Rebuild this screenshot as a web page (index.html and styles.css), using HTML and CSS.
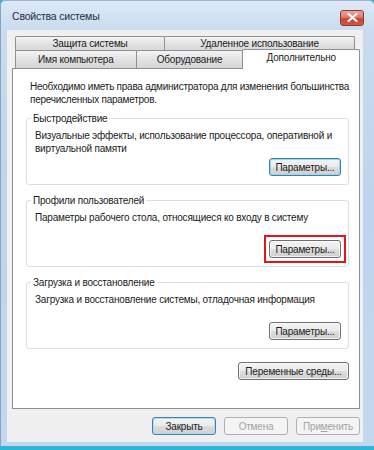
FILE: index.html
```html
<!DOCTYPE html>
<html lang="ru">
<head>
<meta charset="utf-8">
<title>Свойства системы</title>
<link rel="stylesheet" href="styles.css">
</head>
<body>
<div class="window">
  <div class="titlebar">
    <span class="title">Свойства системы</span>
    <span class="close">
      <svg width="11" height="9" viewBox="0 0 11 9"><path d="M1.5 1 L9.5 8 M9.5 1 L1.5 8" stroke="#fff" stroke-width="2.2" stroke-linecap="round"/></svg>
    </span>
  </div>
  <div class="client">
    <div class="tabs">
      <div class="tabrow row1">
        <div class="tab tab-protect">Защита системы</div>
        <div class="tab tab-remote">Удаленное использование</div>
      </div>
      <div class="tabrow row2">
        <div class="tab tab-name">Имя компьютера</div>
        <div class="tab tab-hw">Оборудование</div>
        <div class="tab tab-adv selected">Дополнительно</div>
      </div>
    </div>
    <div class="panel">
      <p class="note">Необходимо иметь права администратора для изменения большинства перечисленных параметров.</p>
      <fieldset class="group">
        <legend>Быстродействие</legend>
        <div class="desc">Визуальные эффекты, использование процессора, оперативной и виртуальной памяти</div>
        <div class="actions"><button class="btn btn-params focus">Параметры...</button></div>
      </fieldset>
      <fieldset class="group">
        <legend>Профили пользователей</legend>
        <div class="desc">Параметры рабочего стола, относящиеся ко входу в систему</div>
        <div class="actions"><span class="mark"><button class="btn btn-params">Параметры...</button></span></div>
      </fieldset>
      <fieldset class="group">
        <legend>Загрузка и восстановление</legend>
        <div class="desc">Загрузка и восстановление системы, отладочная информация</div>
        <div class="actions"><button class="btn btn-params">Параметры...</button></div>
      </fieldset>
      <div class="env"><button class="btn btn-env">Переменные среды...</button></div>
    </div>
    <div class="footer">
      <button class="btn btn-foot default">Закрыть</button>
      <button class="btn btn-foot disabled">Отмена</button>
      <button class="btn btn-foot disabled">При<u>м</u>енить</button>
    </div>
  </div>
</div>
</body>
</html>
```

FILE: styles.css
```css
* { box-sizing: border-box; }
html, body { margin: 0; padding: 0; }
body {
  width: 374px;
  height: 450px;
  background: #2fb6d6;
  font-family: "Liberation Sans", Arial, sans-serif;
  font-size: 10px;
  letter-spacing: -0.2px;
  color: #1b1b1b;
  overflow: hidden;
}
.window {
  width: 374px;
  height: 446px;
  background: linear-gradient(#dde9f6 0px, #c8dbf0 30px, #bed4ec 200px, #c3d8ef 446px);
  border-left: 1px solid #8aa3bf;
  border-top: 1px solid #9fb4cc;
  border-radius: 5px 5px 0 0;
  display: flex;
  flex-direction: column;
}
.titlebar {
  height: 29px;
  display: flex;
  align-items: center;
  justify-content: space-between;
  padding: 0 10px 0 11px;
}
.title {
  font-size: 10.5px;
  color: #1e2f45;
}
.close {
  width: 24px;
  height: 16px;
  margin-top: 4px;
  border: 1px solid #8a3b30;
  border-radius: 3px;
  background: linear-gradient(#eba596 0%, #dd7b68 45%, #c9432e 55%, #d25a44 100%);
  display: flex;
  align-items: center;
  justify-content: center;
}
.client {
  flex: 1;
  margin: 0 11px 4px 6px;
  background: #f0f0f0;
  padding: 6px 3px 7px 5px;
  display: flex;
  flex-direction: column;
}
.tabs {
  margin-left: 3px;
}
.tabrow {
  display: flex;
}
.row1 { height: 14px; }
.row2 { height: 18px; align-items: flex-end; }
.tab {
  border: 1px solid #8c9099;
  border-bottom: none;
  background: linear-gradient(#f4f4f4, #e2e2e2 50%, #d6d6d6);
  text-align: center;
  margin-left: -1px;
}
.tab:first-child { margin-left: 0; }
.row1 .tab { height: 15px; line-height: 13px; border-radius: 2px 2px 0 0; }
.row2 .tab { height: 18px; line-height: 18px; border-radius: 2px 2px 0 0; }
.tab-protect { width: 150px; }
.tab-remote { width: 191px; }
.tab-name { width: 122px; }
.tab-hw { width: 108px; }
.tab-adv { width: 118px; }
.row2 .tab.selected {
  height: 20px;
  margin-bottom: -1px;
  line-height: 16px;
  background: #fff;
  position: relative;
  z-index: 1;
}
.panel {
  flex: 1;
  background: #fff;
  border: 1px solid #8c9099;
  padding: 11px 10px 0 13px;
}
.note {
  margin: 0 -9px 6px 4px;
  line-height: 13px;
  letter-spacing: -0.25px;
}
.group {
  margin: 0 0 9px 0;
  border: 1px solid #d5dfe5;
  border-radius: 3px;
  padding: 4px 7px 8px 8px;
  min-width: 0;
}
.group legend {
  padding: 0 2px;
  margin-left: -4px;
  line-height: 13px;
}
.desc {
  line-height: 13px;
  min-height: 26px;
}
.actions {
  display: flex;
  justify-content: flex-end;
  margin-top: 3px;
}
.btn {
  font-family: "Liberation Sans", Arial, sans-serif;
  font-size: 10px;
  letter-spacing: -0.2px;
  color: #1b1b1b;
  height: 18px;
  padding: 0;
  border: 1px solid #707070;
  border-radius: 3px;
  background: linear-gradient(#f3f3f3 0%, #ebebeb 48%, #dddddd 52%, #cfcfcf 100%);
  box-shadow: inset 0 0 0 1px rgba(255,255,255,0.7);
}
.btn-params { width: 72px; }
.btn.focus {
  border-color: #3c7fb1;
  box-shadow: inset 0 0 0 1px #9ad5f3;
}
.mark {
  display: flex;
  border: 2px solid #e3141c;
  padding: 3px;
  margin: -5px -5px -5px 0;
}
.env {
  display: flex;
  justify-content: flex-end;
  margin-top: 13px;
}
.btn-env { width: 111px; }
.footer {
  display: flex;
  justify-content: flex-end;
  gap: 8px;
  margin-top: 8px;
}
.btn-foot { width: 64px; }
.btn.default {
  border-color: #3c7fb1;
  box-shadow: inset 0 0 0 1px #b6dcf4;
}
.btn.disabled {
  color: #a3a3a3;
  border-color: #adb2b5;
  background: #f4f4f4;
  box-shadow: none;
}
.btn u { text-decoration-color: #a3a3a3; }
```
